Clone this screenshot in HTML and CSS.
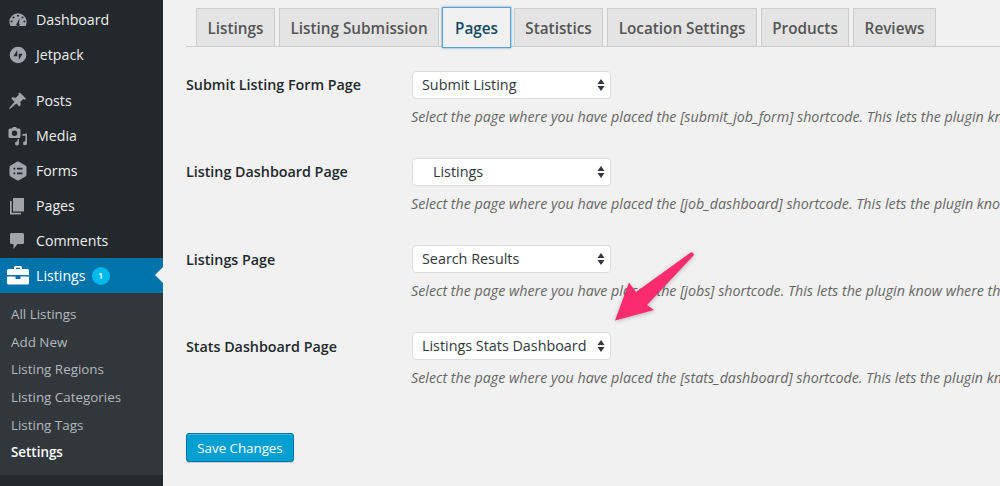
FILE: index.html
```html
<!DOCTYPE html>
<html lang="en">
<head>
<meta charset="utf-8">
<title>Settings</title>
<link rel="stylesheet" href="styles.css">
</head>
<body>
<div class="page">
  <nav class="sidebar">
    <ul class="menu">
      <li class="item"><svg class="ico" viewBox="0 0 20 20"><path d="M10 3.200a8.600 8.600 0 0 0-8.600 8.600c0 1.500.4 3 1.100 4.200h15a8.600 8.600 0 0 0 1.100-4.200A8.600 8.600 0 0 0 10 3.200zM10 4.700a1 1 0 1 1 0 2 1 1 0 0 1 0-2zM5.500 6.500a1 1 0 1 1 0 2 1 1 0 0 1 0-2zm9 0a1 1 0 1 1 0 2 1 1 0 0 1 0-2zM3.600 10.500a1 1 0 1 1 0 2 1 1 0 0 1 0-2zm12.800 0a1 1 0 1 1 0 2 1 1 0 0 1 0-2zM11.700 8l-.7 5.200a1.700 1.700 0 1 1-2 0z" fill-rule="evenodd"/></svg><span>Dashboard</span></li>
      <li class="item gap"><svg class="ico" viewBox="0 0 20 20"><path d="M10 1.700a8.300 8.300 0 1 0 0 16.600 8.300 8.300 0 0 0 0-16.600zM9.300 5v6.300H5.400zM10.700 15V8.700h3.900z" fill-rule="evenodd"/></svg><span>Jetpack</span></li>
      <li class="item"><svg class="ico" viewBox="0 0 20 20"><path d="M11.800 1.500l6.300 6.200-1.500 1-1.300-.6-3 3 .4 3-1.300 1.400-3-3-6.400 5.500-.9-.8 5.400-6.500-3-3L3.900 6.300l3.900.5 3-3-.5-1.300z"/></svg><span>Posts</span></li>
      <li class="item"><svg class="ico" viewBox="0 0 20 20"><path d="M2 2.500h2l1-1.500h3l1 1.500h2a1.500 1.500 0 0 1 1.500 1.500v6.500A1.500 1.500 0 0 1 11 12H2A1.500 1.500 0 0 1 .5 10.500V4A1.500 1.500 0 0 1 2 2.500zm4.500 2a2.700 2.700 0 1 0 0 5.400 2.700 2.700 0 0 0 0-5.400z" fill-rule="evenodd"/><path d="M19 7.500v9.700a2 2 0 1 1-1.500-1.900V9.500l-3 .6V8.200zM9.500 13h1.500v4.500a2 2 0 1 1-1.500-1.900z"/></svg><span>Media</span></li>
      <li class="item"><svg class="ico" viewBox="0 0 20 20"><path d="M9 .8a2 2 0 0 1 2 0l6.500 3.800a2 2 0 0 1 1 1.700v7.400a2 2 0 0 1-1 1.700L11 19.200a2 2 0 0 1-2 0l-6.500-3.800a2 2 0 0 1-1-1.700V6.300a2 2 0 0 1 1-1.700zM5.500 6.800v1.700h1.700V6.800zm3.500 0v1.700h5.500V6.800zM5.500 11.500v1.700h1.700v-1.700zm3.500 0v1.700h5.500v-1.700z" fill-rule="evenodd"/></svg><span>Forms</span></li>
      <li class="item"><svg class="ico" viewBox="0 0 20 20"><path d="M5 2h11v13.500H5zM2 5h1.700v11.800H13V18.500H2z"/></svg><span>Pages</span></li>
      <li class="item"><svg class="ico" viewBox="0 0 20 20"><path d="M3.500 2h11A1.500 1.500 0 0 1 16 3.500v8a1.500 1.500 0 0 1-1.500 1.500H9.500L5.500 18v-5h-2A1.500 1.500 0 0 1 2 11.500v-8A1.500 1.500 0 0 1 3.500 2z"/></svg><span>Comments</span></li>
      <li class="item current"><svg class="ico" viewBox="0 0 24 20"><path d="M8 3V1.500A1.500 1.500 0 0 1 9.500 0h5A1.500 1.500 0 0 1 16 1.500V3h5.500A1.500 1.500 0 0 1 23 4.500V9H1V4.500A1.500 1.500 0 0 1 2.500 3zm2-1.300V3h4V1.700zM1 10.500h8.500V13h5v-2.500H23V17a1.500 1.500 0 0 1-1.500 1.500h-19A1.500 1.500 0 0 1 1 17z" fill-rule="evenodd"/></svg><span>Listings</span><b class="badge">1</b></li>
    </ul>
    <ul class="submenu">
      <li>All Listings</li>
      <li>Add New</li>
      <li>Listing Regions</li>
      <li>Listing Categories</li>
      <li>Listing Tags</li>
      <li class="on">Settings</li>
    </ul>
  </nav>
  <main class="content">
    <div class="tabs">
      <a class="tab w1">Listings</a>
      <a class="tab w2">Listing Submission</a>
      <a class="tab active">Pages</a>
      <a class="tab w4">Statistics</a>
      <a class="tab w5">Location Settings</a>
      <a class="tab w6">Products</a>
      <a class="tab w7">Reviews</a>
    </div>
    <div class="rows">
      <div class="row">
        <div class="label">Submit Listing Form Page</div>
        <div class="field">
          <div class="select"><span>Submit Listing</span><svg class="updown" viewBox="0 0 8 12"><path d="M4 0l3.500 5h-7zM4 12L.5 7h7z"/></svg></div>
          <p class="desc">Select the page where you have placed the [submit_job_form] shortcode. This lets the plugin know where the form is located.</p>
        </div>
      </div>
      <div class="row">
        <div class="label">Listing Dashboard Page</div>
        <div class="field">
          <div class="select"><span class="indent">Listings</span><svg class="updown" viewBox="0 0 8 12"><path d="M4 0l3.500 5h-7zM4 12L.5 7h7z"/></svg></div>
          <p class="desc">Select the page where you have placed the [job_dashboard] shortcode. This lets the plugin know where the dashboard is located.</p>
        </div>
      </div>
      <div class="row">
        <div class="label">Listings Page</div>
        <div class="field">
          <div class="select"><span>Search Results</span><svg class="updown" viewBox="0 0 8 12"><path d="M4 0l3.500 5h-7zM4 12L.5 7h7z"/></svg></div>
          <p class="desc">Select the page where you have placed the [jobs] shortcode. This lets the plugin know where the job listings page is located.</p>
        </div>
      </div>
      <div class="row">
        <div class="label">Stats Dashboard Page</div>
        <div class="field">
          <div class="select"><span>Listings Stats Dashboard</span><svg class="updown" viewBox="0 0 8 12"><path d="M4 0l3.500 5h-7zM4 12L.5 7h7z"/></svg></div>
          <p class="desc">Select the page where you have placed the [stats_dashboard] shortcode. This lets the plugin know where the dashboard is located.</p>
        </div>
      </div>
    </div>
    <button class="save" type="button">Save Changes</button>
  </main>
</div>
<svg class="arrow" viewBox="0 0 100 85"><path d="M10 75.500L24 37.500L31 47L85 8Q88 6 89 10L42 60L49 65Z"/></svg>
</body>
</html>
```
FILE: styles.css
```css
* { box-sizing: border-box; }
html, body { margin: 0; height: 100%; overflow: hidden; }
body { font-family: "Open Sans", "Noto Sans", sans-serif; background: #f1f1f1; color: #23282d; }
ul { list-style: none; margin: 0; padding: 0; }
.page { display: flex; height: 486px; overflow: hidden; }
.sidebar { width: 163px; flex: none; background: #23282d; padding-top: 2px; }
.item { display: flex; align-items: center; height: 35px; padding-left: 8px; color: #eee; font-size: 14.2px; position: relative; }
.item span { margin-left: 8px; }
.item.gap { margin-bottom: 11px; }
.ico { width: 20px; height: 20px; fill: #a0a5aa; flex: none; }
.current { background: #0073aa; color: #fff; }
.current .ico { fill: #fff; width: 24px; margin-left: -2px; margin-right: -2px; }
.current::after { content: ""; position: absolute; right: 0; top: 9px; border: 8px solid transparent; border-right-color: #f1f1f1; border-left-width: 0; }
.badge { width: 18px; height: 18px; margin-left: 6px; border-radius: 50%; background: #00b9eb; color: #fff; font-size: 9px; font-weight: 600; line-height: 18px; text-align: center; }
.submenu { background: #32373c; height: 182px; padding-top: 8px; }
.submenu li { height: 27.7px; line-height: 27.7px; padding-left: 11px; font-size: 13.4px; color: #b4b9be; }
.submenu .on { color: #fff; font-weight: 600; }
.content { flex: 1; min-width: 0; padding: 8px 0 0 23px; }
.tabs { display: flex; height: 39px; padding-left: 10px; border-bottom: 1px solid #ccc; }
.tab { flex: none; height: 38px; background: #e4e4e4; border: 1px solid #ccc; border-bottom: 0; color: #555; font-size: 15.3px; font-weight: 600; line-height: 39px; text-align: center; white-space: nowrap; }
.w1 { width: 79px; margin-right: 4px; }
.w2 { width: 160px; margin-right: 3px; }
.w4 { width: 89px; margin-right: 4px; }
.w5 { width: 150px; margin-right: 4px; }
.w6 { width: 88px; margin-right: 4px; }
.w7 { width: 83px; }
.active { width: 69px; height: 41px; margin: -1px 3px 0 0; line-height: 40px; background: #f1f1f1; color: #124964; border: 1px solid #5b9dd9; box-shadow: 0 0 2px rgba(30,140,190,.8); position: relative; }
.rows { display: flex; flex-direction: column; padding-top: 24px; }
.row { display: flex; height: 87.15px; }
.label { width: 226px; flex: none; padding-top: .3px; font-size: 14.3px; font-weight: 600; line-height: 28px; }
.field { min-width: 0; flex: 1; }
.select { display: flex; align-items: center; justify-content: space-between; width: 199px; height: 28px; padding: 0 5px 1px 9px; background: #fff; border: 1px solid #ddd; border-radius: 4px; color: #32373c; font-size: 14.35px; white-space: nowrap; }
.indent { padding-left: 11px; }
.updown { width: 8px; height: 12px; fill: #32373c; flex: none; margin-top: 1px; }
.desc { margin: 8px 0 0 -1px; font-size: 14.25px; font-style: italic; line-height: 19px; color: #666; white-space: nowrap; }
.save { display: block; width: 108px; height: 29px; margin-top: 13.7px; padding: 0; background: #00a0d2; border: 1px solid #0073aa; border-radius: 3px; box-shadow: inset 0 1px 0 rgba(120,200,230,.5), 0 1px 0 rgba(0,0,0,.15); color: #fff; font-family: inherit; font-size: 13.3px; }
.arrow { position: absolute; left: 605px; top: 245px; width: 100px; height: 85px; fill: #fb2c6e; filter: drop-shadow(0 1px 2px rgba(0,0,0,.25)); }
```
